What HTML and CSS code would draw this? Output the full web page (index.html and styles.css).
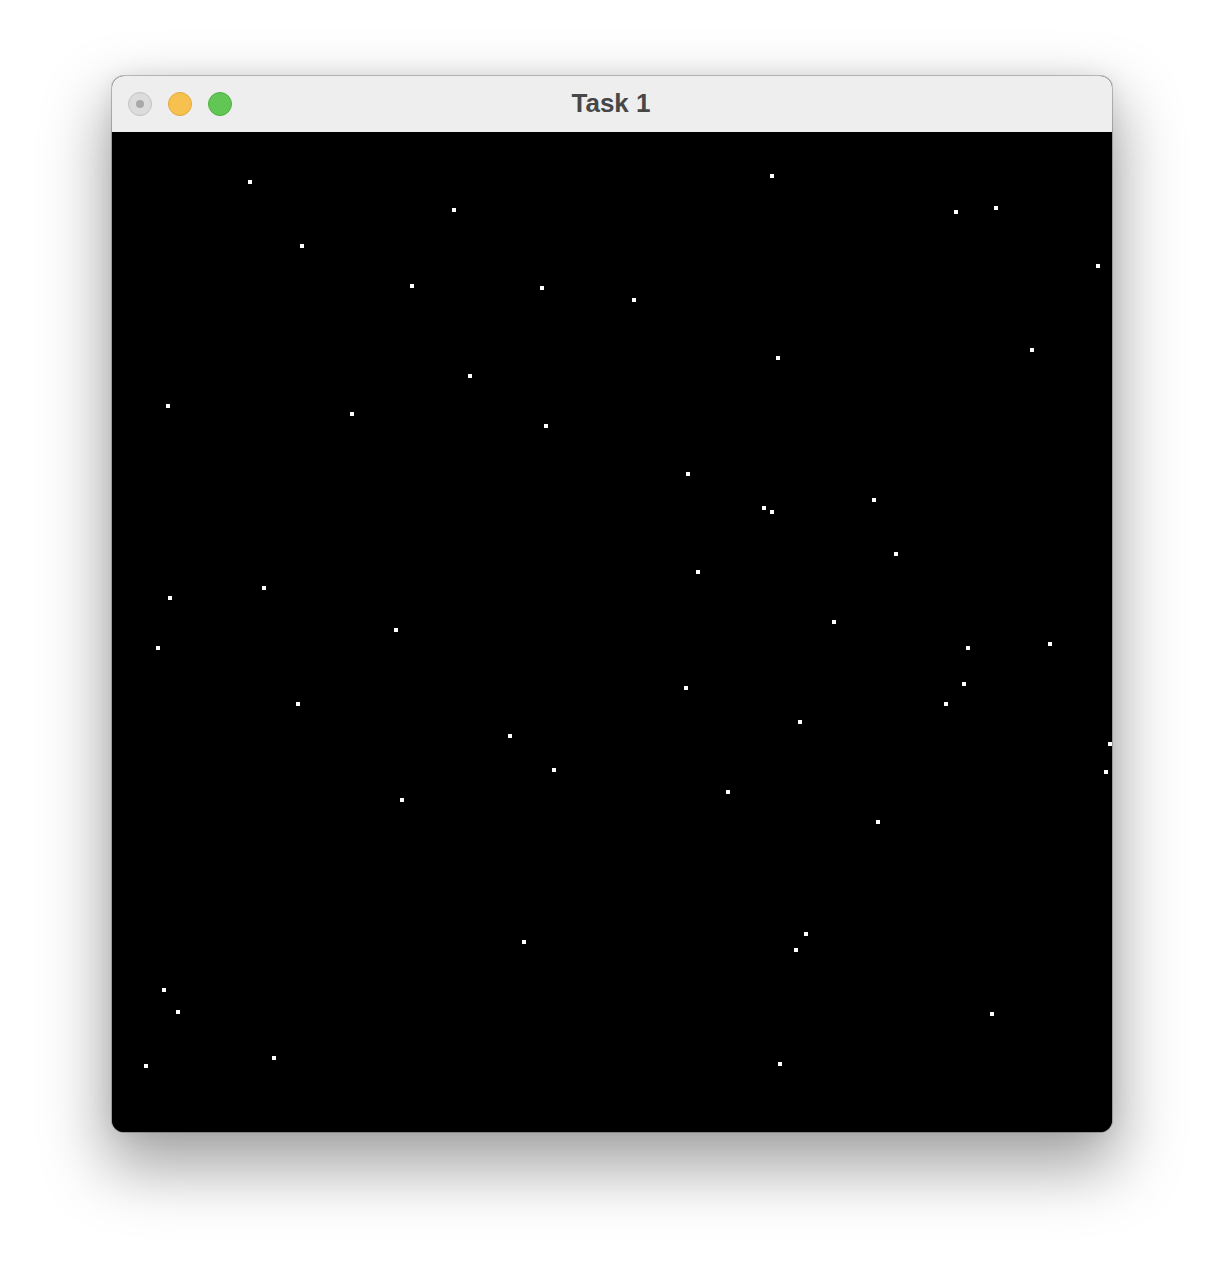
FILE: index.html
```html
<!DOCTYPE html>
<html>
<head>
<meta charset="utf-8">
<title>Task 1</title>
<link rel="stylesheet" href="styles.css">
</head>
<body>
<div class="window">
  <div class="titlebar">
    <div class="lights">
      <span class="light close"><span class="dot"></span></span>
      <span class="light min"></span>
      <span class="light max"></span>
    </div>
    <div class="title">Task 1</div>
  </div>
  <div class="canvas">
    <i class="star" style="left:136px;top:48px"></i>
    <i class="star" style="left:340px;top:76px"></i>
    <i class="star" style="left:188px;top:112px"></i>
    <i class="star" style="left:298px;top:152px"></i>
    <i class="star" style="left:428px;top:154px"></i>
    <i class="star" style="left:356px;top:242px"></i>
    <i class="star" style="left:54px;top:272px"></i>
    <i class="star" style="left:238px;top:280px"></i>
    <i class="star" style="left:432px;top:292px"></i>
    <i class="star" style="left:658px;top:42px"></i>
    <i class="star" style="left:842px;top:78px"></i>
    <i class="star" style="left:882px;top:74px"></i>
    <i class="star" style="left:984px;top:132px"></i>
    <i class="star" style="left:520px;top:166px"></i>
    <i class="star" style="left:664px;top:224px"></i>
    <i class="star" style="left:918px;top:216px"></i>
    <i class="star" style="left:56px;top:464px"></i>
    <i class="star" style="left:150px;top:454px"></i>
    <i class="star" style="left:282px;top:496px"></i>
    <i class="star" style="left:44px;top:514px"></i>
    <i class="star" style="left:184px;top:570px"></i>
    <i class="star" style="left:396px;top:602px"></i>
    <i class="star" style="left:440px;top:636px"></i>
    <i class="star" style="left:288px;top:666px"></i>
    <i class="star" style="left:574px;top:340px"></i>
    <i class="star" style="left:650px;top:374px"></i>
    <i class="star" style="left:658px;top:378px"></i>
    <i class="star" style="left:760px;top:366px"></i>
    <i class="star" style="left:782px;top:420px"></i>
    <i class="star" style="left:584px;top:438px"></i>
    <i class="star" style="left:720px;top:488px"></i>
    <i class="star" style="left:854px;top:514px"></i>
    <i class="star" style="left:936px;top:510px"></i>
    <i class="star" style="left:850px;top:550px"></i>
    <i class="star" style="left:832px;top:570px"></i>
    <i class="star" style="left:572px;top:554px"></i>
    <i class="star" style="left:686px;top:588px"></i>
    <i class="star" style="left:996px;top:610px"></i>
    <i class="star" style="left:992px;top:638px"></i>
    <i class="star" style="left:614px;top:658px"></i>
    <i class="star" style="left:410px;top:808px"></i>
    <i class="star" style="left:50px;top:856px"></i>
    <i class="star" style="left:64px;top:878px"></i>
    <i class="star" style="left:160px;top:924px"></i>
    <i class="star" style="left:32px;top:932px"></i>
    <i class="star" style="left:764px;top:688px"></i>
    <i class="star" style="left:692px;top:800px"></i>
    <i class="star" style="left:682px;top:816px"></i>
    <i class="star" style="left:878px;top:880px"></i>
    <i class="star" style="left:666px;top:930px"></i>
  </div>
</div>
</body>
</html>
```
FILE: styles.css
```css
html, body {
  margin: 0;
  padding: 0;
  background: #ffffff;
}
body {
  padding: 76px 0 0 112px;
  min-height: 1280px;
  box-sizing: border-box;
  font-family: "Liberation Sans", Arial, sans-serif;
}
.window {
  width: 1000px;
  border-radius: 12px;
  overflow: hidden;
  background: #000;
  box-shadow: 0 0 0 1px rgba(0, 0, 0, 0.22), 0 30px 64px 6px rgba(0, 0, 0, 0.36), 0 0 22px rgba(0, 0, 0, 0.08);
}
.titlebar {
  height: 56px;
  background: #eeeeee;
  display: flex;
  align-items: center;
  position: relative;
}
.lights {
  display: flex;
  gap: 16px;
  padding-left: 16px;
  position: relative;
  z-index: 1;
}
.light {
  width: 24px;
  height: 24px;
  border-radius: 50%;
  box-sizing: border-box;
  display: flex;
  align-items: center;
  justify-content: center;
}
.close {
  background: #dcdcdc;
  border: 1px solid #c2c2c2;
}
.close .dot {
  width: 8px;
  height: 8px;
  border-radius: 50%;
  background: #a9a9a9;
}
.min {
  background: #f7c150;
  border: 1px solid #e1a83c;
}
.max {
  background: #62c654;
  border: 1px solid #50ae42;
}
.title {
  position: absolute;
  inset: 0;
  display: flex;
  align-items: center;
  justify-content: center;
  font-size: 26px;
  font-weight: bold;
  color: #474747;
  padding-bottom: 2px;
  padding-right: 2px;
}
.canvas {
  position: relative;
  width: 1000px;
  height: 1000px;
  background: #000;
}
.star {
  position: absolute;
  width: 4px;
  height: 4px;
  background: #fff;
}
```
